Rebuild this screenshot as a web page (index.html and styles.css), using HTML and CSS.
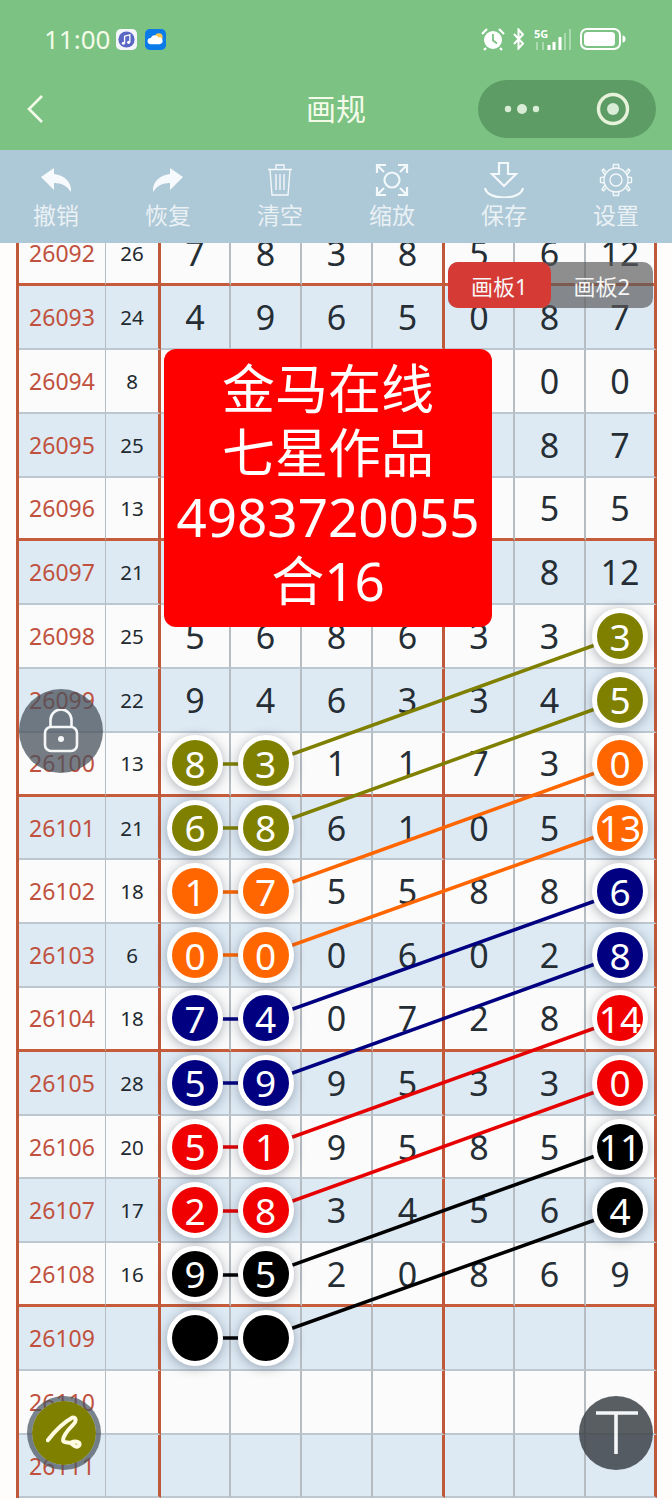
FILE: index.html
```html
<!DOCTYPE html>
<html lang="zh">
<head>
<meta charset="utf-8">
<title>画规</title>
<link rel="stylesheet" href="styles.css">
</head>
<body>
<div class="page">
  <header class="top">
    <div class="status">
      <span class="time">11:00</span>
      <svg class="app-icon" viewBox="0 0 22 22"><rect width="22" height="22" rx="5" fill="#f4f6fc"/><circle cx="11" cy="11" r="8.5" fill="#5a68c4"/><path d="M9 15V7.5l5.5-1.3V14" fill="none" stroke="#fff" stroke-width="1.4"/><circle cx="7.7" cy="15" r="1.6" fill="#fff"/><circle cx="13.2" cy="14" r="1.6" fill="#fff"/></svg>
      <svg class="app-icon" viewBox="0 0 22 22"><rect width="22" height="22" rx="5" fill="#0a7be8"/><circle cx="14.5" cy="8.5" r="4" fill="#ffc94d"/><path d="M6 16a3.3 3.3 0 0 1 0-6.6 4.5 4.5 0 0 1 8-.6 3.6 3.6 0 0 1 1.5 7.2z" fill="#fff"/></svg>
      <span class="status-right">
        <svg class="ic-alarm" viewBox="0 0 24 24"><circle cx="12" cy="13" r="9" fill="#fff"/><path d="M12 7v6.500l4 3" fill="none" stroke="#7bc283" stroke-width="1.800"/><path d="M1 7l5-5M23 7l-5-5M5 21l-2 2M19 21l2 2" stroke="#fff" stroke-width="2.200" fill="none"/></svg>
        <svg class="ic-bt" viewBox="0 0 14 22"><path d="M2 6l9 9.500-4.500 5V1.500L11 6.500 2 16" fill="none" stroke="#fff" stroke-width="2"/></svg>
        <svg class="ic-signal" viewBox="0 0 38 24"><text x="0" y="11" class="five-g">5G</text><path d="M3 15v8M9 15v8" stroke="#a9dbae" stroke-width="2"/><path d="M15 18v5M20 15v8M26 10v13" stroke="#fff" stroke-width="3"/><path d="M31 6v17M36 2v21" stroke="#a9dbae" stroke-width="2"/></svg>
        <svg class="ic-battery" viewBox="0 0 46 22"><rect x="1" y="1" width="39" height="20" rx="6" fill="none" stroke="#fff" stroke-width="2"/><rect x="4" y="4" width="31" height="14" rx="3.500" fill="#fff"/><path d="M42.500 7.500c2 0 3 1.500 3 3.500s-1 3.500-3 3.500z" fill="#fff"/></svg>
      </span>
    </div>
    <nav class="nav">
      <svg class="back" viewBox="0 0 18 30"><path d="M16 2L3 15l13 13" fill="none" stroke="#f3fbe8" stroke-width="2.600"/></svg>
      <h1 class="title">画规</h1>
      <div class="capsule">
        <svg class="dots" viewBox="0 0 36 12"><circle cx="4" cy="6" r="3.200" fill="#d8ecd6"/><circle cx="18" cy="6" r="5" fill="#d8ecd6"/><circle cx="32" cy="6" r="3.200" fill="#d8ecd6"/></svg>
        <svg class="target" viewBox="0 0 34 34"><circle cx="17" cy="17" r="14.500" fill="none" stroke="#e6f3da" stroke-width="3.400"/><circle cx="17" cy="17" r="6" fill="#d8ecd6"/></svg>
      </div>
    </nav>
  </header>

  <div class="toolbar">
    <div class="tool"><svg viewBox="0 0 40 34"><path d="M5 14L18 5v6c11 1 18 9 17 18-4-6-9-9-17-9v7z" fill="#f6fafc"/></svg><span>撤销</span></div>
    <div class="tool"><svg viewBox="0 0 40 34"><path d="M35 14L22 5v6C11 12 4 20 5 29c4-6 9-9 17-9v7z" fill="#f6fafc"/></svg><span>恢复</span></div>
    <div class="tool"><svg viewBox="0 0 40 34" class="line"><path d="M8 6.500h24M16 6V2h8v4M10 7l2 25h16l2-25M16 11v16M20 11v16M24 11v16"/></svg><span>清空</span></div>
    <div class="tool"><svg viewBox="0 0 40 34" class="line thick"><circle cx="20" cy="17" r="7.500"/><path d="M5 10V2h9M35 10V2h-9M5 24v8h9M35 24v8h-9M5 2l7 7M35 2l-7 7M5 32l7-7M35 32l-7-7"/></svg><span>缩放</span></div>
    <div class="tool"><svg viewBox="0 0 40 36" class="line thick"><path d="M15 1h9v11h8L20 24 8 12h7zM1 26c1 6 9 9.500 19 9.500s18-3.500 19-9.500"/></svg><span>保存</span></div>
    <div class="tool"><svg viewBox="0 0 40 34" class="line"><circle cx="20" cy="17" r="6"/><g class="gear"><circle cx="20" cy="17" r="12"/><path d="M17 5.500l.5-4h5l.5 4M17 28.500l.5 4h5l.5-4M8.500 14l-4 .5v5l4 .5M31.500 14l4 .5v5l-4 .5M10 9l-2.500-3 -1.500 1.500L9 12M30 9l2.500-3 1.500 1.500L31 12M10 25l-2.500 3-1.500-1.500L9 22M30 25l2.500 3 1.500-1.500L31 22"/></g></svg><span>设置</span></div>
  </div>

  <main class="viewport">
    <div class="board">
      <div class="row white end"><b>26092</b><i>26</i><u>7</u><u>8</u><u>3</u><u>8</u><u>5</u><u>6</u><u class="last">12</u></div>
      <div class="row blue"><b>26093</b><i>24</i><u>4</u><u>9</u><u>6</u><u>5</u><u>0</u><u>8</u><u class="last">7</u></div>
      <div class="row white"><b>26094</b><i>8</i><u></u><u></u><u></u><u></u><u></u><u>0</u><u class="last">0</u></div>
      <div class="row blue"><b>26095</b><i>25</i><u></u><u></u><u></u><u></u><u></u><u>8</u><u class="last">7</u></div>
      <div class="row white end"><b>26096</b><i>13</i><u></u><u></u><u></u><u></u><u></u><u>5</u><u class="last">5</u></div>
      <div class="row blue"><b>26097</b><i>21</i><u></u><u></u><u></u><u></u><u></u><u>8</u><u class="last">12</u></div>
      <div class="row white"><b>26098</b><i>25</i><u>5</u><u>6</u><u>8</u><u>6</u><u>3</u><u>3</u><u class="last"><em class="ball olive">3</em></u></div>
      <div class="row blue"><b>26099</b><i>22</i><u>9</u><u>4</u><u>6</u><u>3</u><u>3</u><u>4</u><u class="last"><em class="ball olive">5</em></u></div>
      <div class="row white end"><b>26100</b><i>13</i><u><em class="ball olive">8</em></u><u><em class="ball olive">3</em></u><u>1</u><u>1</u><u>7</u><u>3</u><u class="last"><em class="ball orange">0</em></u></div>
      <div class="row blue"><b>26101</b><i>21</i><u><em class="ball olive">6</em></u><u><em class="ball olive">8</em></u><u>6</u><u>1</u><u>0</u><u>5</u><u class="last"><em class="ball orange">13</em></u></div>
      <div class="row white"><b>26102</b><i>18</i><u><em class="ball orange">1</em></u><u><em class="ball orange">7</em></u><u>5</u><u>5</u><u>8</u><u>8</u><u class="last"><em class="ball navy">6</em></u></div>
      <div class="row blue"><b>26103</b><i>6</i><u><em class="ball orange">0</em></u><u><em class="ball orange">0</em></u><u>0</u><u>6</u><u>0</u><u>2</u><u class="last"><em class="ball navy">8</em></u></div>
      <div class="row white end"><b>26104</b><i>18</i><u><em class="ball navy">7</em></u><u><em class="ball navy">4</em></u><u>0</u><u>7</u><u>2</u><u>8</u><u class="last"><em class="ball red">14</em></u></div>
      <div class="row blue"><b>26105</b><i>28</i><u><em class="ball navy">5</em></u><u><em class="ball navy">9</em></u><u>9</u><u>5</u><u>3</u><u>3</u><u class="last"><em class="ball red">0</em></u></div>
      <div class="row white"><b>26106</b><i>20</i><u><em class="ball red">5</em></u><u><em class="ball red">1</em></u><u>9</u><u>5</u><u>8</u><u>5</u><u class="last"><em class="ball black">11</em></u></div>
      <div class="row blue"><b>26107</b><i>17</i><u><em class="ball red">2</em></u><u><em class="ball red">8</em></u><u>3</u><u>4</u><u>5</u><u>6</u><u class="last"><em class="ball black">4</em></u></div>
      <div class="row white end"><b>26108</b><i>16</i><u><em class="ball black">9</em></u><u><em class="ball black">5</em></u><u>2</u><u>0</u><u>8</u><u>6</u><u class="last">9</u></div>
      <div class="row blue"><b>26109</b><i></i><u><em class="ball black"></em></u><u><em class="ball black"></em></u><u></u><u></u><u></u><u></u><u class="last"></u></div>
      <div class="row white"><b>26110</b><i></i><u></u><u></u><u></u><u></u><u></u><u></u><u class="last"></u></div>
      <div class="row blue"><b>26111</b><i></i><u></u><u></u><u></u><u></u><u></u><u></u><u class="last"></u></div>
    </div>
  </main>

  <svg class="links" viewBox="0 0 672 1500">
    <path class="l-olive" d="M194 764H265L620 636M194 828H265L620 700"/>
    <path class="l-orange" d="M194 892H265L620 764M194 955H265L620 828"/>
    <path class="l-navy" d="M194 1019H265L620 892M194 1083H265L620 955"/>
    <path class="l-red" d="M194 1147H265L620 1019M194 1211H265L620 1083"/>
    <path class="l-black" d="M194 1275H265L620 1147M194 1338H265L620 1211"/>
  </svg>

  <div class="tabs"><span class="tab on">画板1</span><span class="tab">画板2</span></div>

  <div class="notice">金马在线<br>七星作品<br>4983720055<br>合16</div>

  <div class="fab lock"><svg viewBox="0 0 36 44"><path d="M7.500 18v-7a10.500 10.500 0 0 1 21 0v7" fill="none" stroke="#f4f6f7" stroke-width="2.600"/><rect x="2" y="18" width="32" height="24" rx="6" fill="none" stroke="#f4f6f7" stroke-width="2.600"/><circle cx="18" cy="30" r="3" fill="#f4f6f7"/></svg></div>
  <div class="fab pen"><svg viewBox="0 0 40 40"><path d="M2 28C9 19 20 8 29 3c5-1 5 4 1 8-5 5-11 12-11 17 0 3 5 2 8 3 3 1 4 5 8 4 3-1 3-4 0-5-2-1-5 0-6 0" fill="none" stroke="#fffbe0" stroke-width="4.500" stroke-linecap="round" stroke-linejoin="round"/></svg></div>
  <div class="fab text-btn"><svg viewBox="0 0 44 44"><path d="M2 2h42M22 2v41" fill="none" stroke="#f4f6f7" stroke-width="3.600"/></svg></div>
</div>
</body>
</html>
```
FILE: styles.css
```css
* { box-sizing: border-box; }
html, body { margin: 0; padding: 0; }
body { background: #fffdfb; font-family: "Noto Sans", "Noto Sans CJK SC", sans-serif; }
.page { position: relative; width: 672px; height: 1500px; overflow: hidden; background: #fffdfb; }

.top { background: #7bc283; height: 150px; color: #f3fbe8; display: flex; flex-direction: column; }
.status { height: 78px; display: flex; align-items: center; padding: 0 44px 0 44px; }
.time { font-size: 26px; width: 72px; color: #f3fbe8; }
.app-icon { width: 21px; height: 21px; margin-right: 8px; }
.status-right { margin-left: auto; margin-right: 2px; display: flex; align-items: center; }
.ic-alarm { width: 24px; height: 24px; margin-right: 7px; }
.ic-bt { width: 14px; height: 22px; margin-right: 8px; }
.ic-signal { width: 38px; height: 24px; margin-right: 8px; }
.ic-battery { width: 46px; height: 22px; }
.five-g { font-size: 11px; fill: #fff; font-weight: 700; font-family: "Noto Sans", sans-serif; }

.nav { flex: 1; display: grid; grid-template-columns: 1fr auto 1fr; align-items: center; padding: 0 16px 10px 16px; }
.back { width: 18px; height: 30px; margin-left: 10px; }
.title { margin: 0; font-size: 30px; font-weight: 400; line-height: 40px; }
.capsule { justify-self: end; width: 178px; height: 58px; border-radius: 29px; background: #5e9c66; display: flex; align-items: center; justify-content: space-between; padding: 0 26px 0 26px; }
.dots { width: 36px; height: 12px; }
.target { width: 34px; height: 34px; }

.toolbar { height: 93px; background: #adc8d6; display: grid; grid-template-columns: repeat(6, 1fr); }
.tool { display: flex; flex-direction: column; align-items: center; padding-top: 12px; color: #f1f6f9; font-size: 23px; line-height: 30px; }
.tool svg { width: 40px; height: 36px; }
.tool span { opacity: .9; margin-top: 2px; }
.line { fill: none; stroke: #f3f8fa; stroke-width: 1.400; }
.thick { stroke-width: 2.200; }

.viewport { height: 1257px; overflow: hidden; }
.board { margin: -20.500px 0 0 16px; width: 641px; border-left: 3px solid #c0583a; }
.row { display: grid; grid-template-columns: 87px 55px 70px 71px 71px 72px 70px 71px 71px; height: 63.800px; }
.row > * { display: flex; align-items: center; justify-content: center; border-bottom: 2px solid #bcc7d0; border-right: 2px solid #b5bcc2; font-style: normal; font-weight: 400; text-decoration: none; }
.blue { background: #ddeaf4; }
.white { background: #fbfbfb; }
.end > * { border-bottom: 3px solid #c55c3b; }
.row > b { font-size: 23px; color: #c0513e; border-right-width: 1.500px; }
.row > i { font-size: 20.500px; color: #222a31; border-right: 3.500px solid #c0583a; }
.row > u { font-size: 34px; color: #262e35; }
.row > u:nth-child(6) { border-right: 3.500px solid #c0583a; }
.row > .last { border-right: 3.500px solid #c0583a; }

.ball { position: relative; z-index: 2; flex: none; width: 56px; height: 56px; border: 5.500px solid #fff; border-radius: 50%; display: flex; align-items: center; justify-content: center; color: #fff; font-style: normal; font-size: 37px; box-shadow: 0 2px 12px rgba(40, 50, 70, .38); }
.olive { background: #808000; }
.orange { background: #ff6600; }
.navy { background: #000080; }
.red { background: #f00000; }
.black { background: #000; }

.links { position: absolute; left: 0; top: 0; width: 672px; height: 1500px; z-index: 1; fill: none; stroke-width: 3.500px; pointer-events: none; }
.l-olive { stroke: #808000; }
.l-orange { stroke: #ff6600; }
.l-navy { stroke: #000080; }
.l-red { stroke: #e60000; }
.l-black { stroke: #000; }

.tabs { position: absolute; z-index: 3; left: 448px; top: 262px; width: 205px; height: 46px; display: flex; border-radius: 10px; background: rgba(90, 90, 90, .68); }
.tab { flex: 1; display: flex; align-items: center; justify-content: center; border-radius: 10px; color: #f6f6f6; font-size: 22px; }
.on { background: #d63a35; }

.notice { position: absolute; z-index: 4; left: 164px; top: 349px; width: 328px; height: 278px; border-radius: 12px; background: #ff0000; color: #fff; font-size: 53px; line-height: 64px; text-align: center; padding-top: 8px; }

.fab { position: absolute; z-index: 5; border-radius: 50%; display: flex; align-items: center; justify-content: center; }
.lock { left: 19px; top: 689px; width: 84px; height: 84px; background: rgba(70, 80, 90, .74); }
.lock svg { width: 36px; height: 44px; }
.pen { left: 27px; top: 1396px; width: 74px; height: 74px; background: #808000; background-clip: padding-box; border: 5px solid rgba(70, 85, 95, .72); }
.pen svg { width: 36px; height: 36px; }
.text-btn { left: 579px; top: 1396px; width: 74px; height: 74px; background: rgba(60, 66, 72, .85); }
.text-btn svg { width: 44px; height: 44px; }
```
